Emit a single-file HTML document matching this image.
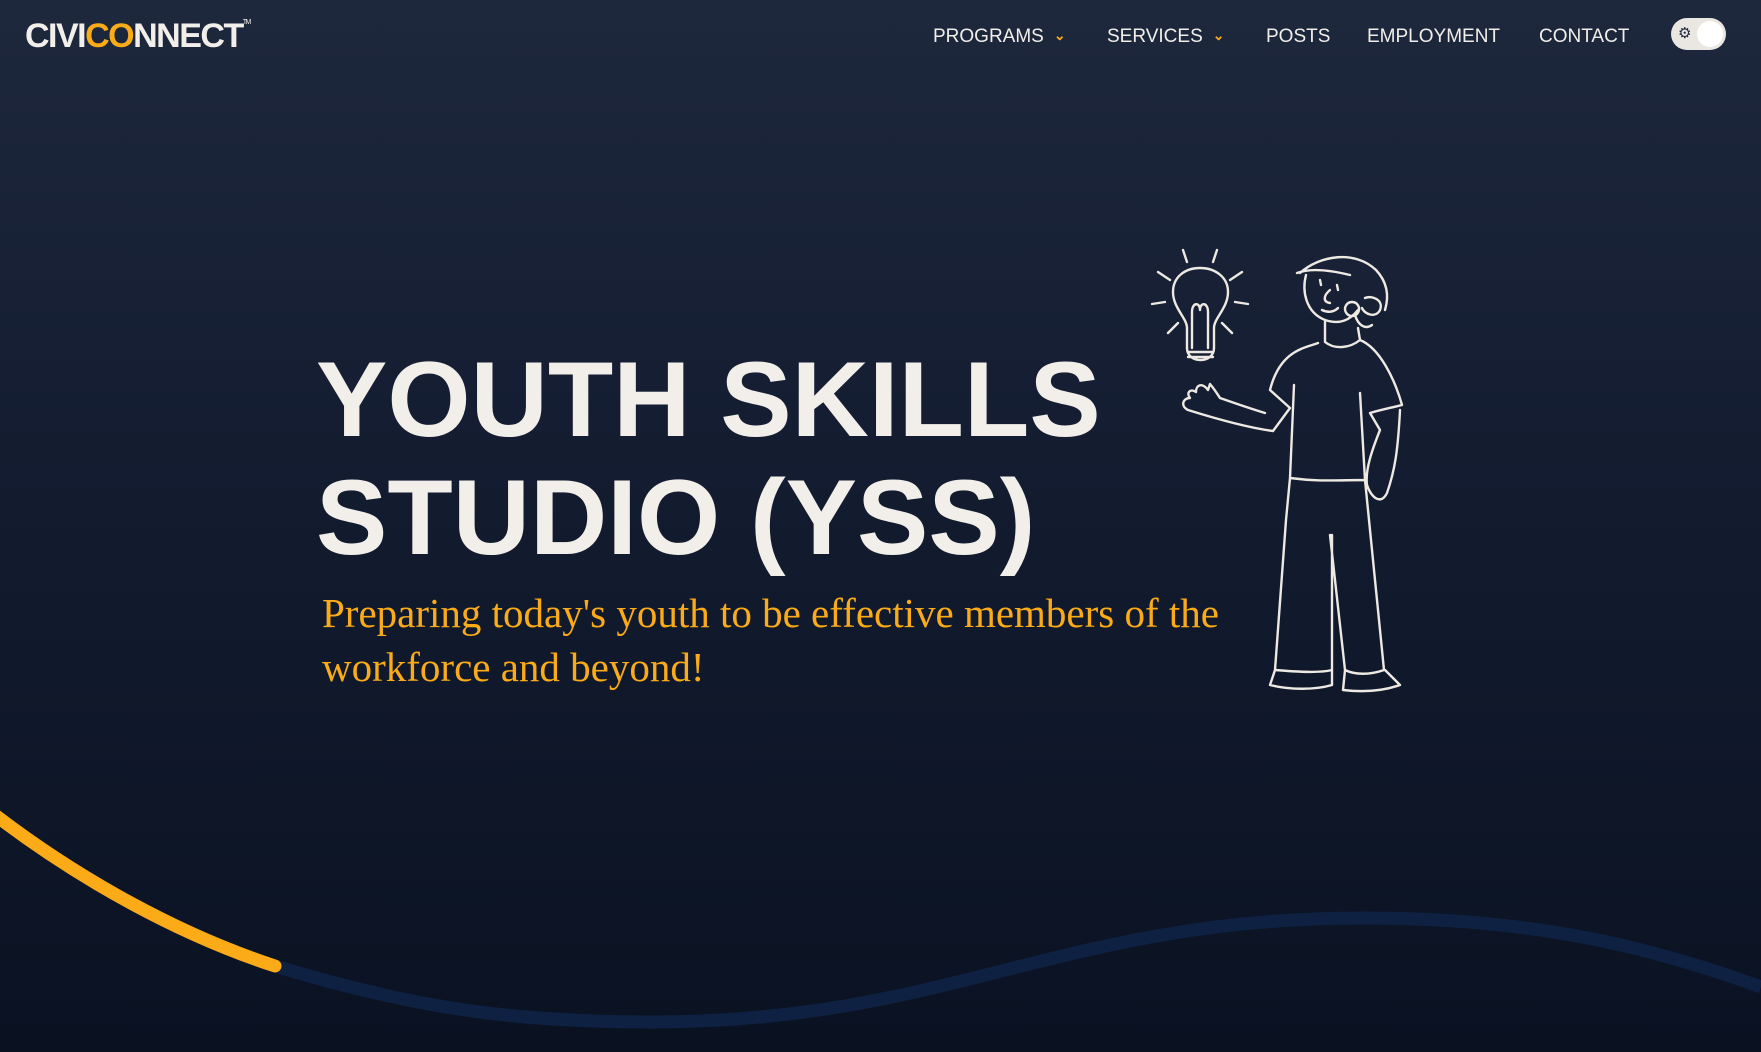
<!DOCTYPE html>
<html><head><meta charset="utf-8"><style>
html,body{margin:0;padding:0}
body{width:1761px;height:1052px;overflow:hidden;position:relative;background:linear-gradient(180deg,#1e283d 0%,#141d31 40%,#0a1222 100%);font-family:"Liberation Sans",sans-serif}
.logo{position:absolute;left:25px;top:17px;font-size:34px;font-weight:bold;color:#f2eee9;letter-spacing:-1.5px;}
.logo span{color:#fbab17}
.logo sup{font-size:7px;vertical-align:top;position:relative;top:2px;font-weight:normal}
.nav{position:absolute;top:26px;font-size:19px;color:#f2eee9;letter-spacing:0}
.chev{color:#fbab17;font-size:14px;margin-left:10px;position:relative;top:-2px;font-weight:bold}
.toggle{position:absolute;left:1671px;top:18px;width:55px;height:32px;border-radius:16px;background:#eae6e1}
.toggle .k{position:absolute;right:3px;top:3px;width:26px;height:26px;border-radius:50%;background:#fff}
.toggle .s{position:absolute;left:7px;top:6px;font-size:15px;color:#1e283d}
h1{position:absolute;left:316px;top:340px;margin:0;font-size:107px;line-height:118px;color:#f2eee9;font-weight:bold;letter-spacing:0}
p{position:absolute;left:322px;top:586px;margin:0;font-family:"Liberation Serif",serif;font-size:41px;line-height:54px;color:#fbab17}
</style></head><body>
<div class="logo">CIVI<span>CO</span>NNECT<sup>TM</sup></div>
<div class="nav" style="left:933px">PROGRAMS<span class="chev">&#8964;</span></div>
<div class="nav" style="left:1107px">SERVICES<span class="chev">&#8964;</span></div>
<div class="nav" style="left:1266px">POSTS</div>
<div class="nav" style="left:1367px">EMPLOYMENT</div>
<div class="nav" style="left:1539px">CONTACT</div>
<div class="toggle"><span class="s">&#9881;</span><div class="k"></div></div>
<h1>YOUTH SKILLS<br>STUDIO (YSS)</h1>
<p>Preparing today's youth to be effective members of the<br>workforce and beyond!</p>
<svg style="position:absolute;left:1140px;top:230px" width="300" height="480" viewBox="0 0 300 480" fill="none" stroke="#eee9e2" stroke-width="2.4" stroke-linecap="round" stroke-linejoin="round">
<path d="M43 20 L47 32 M77 20 L73 32 M18 42 L30 50 M102 42 L90 50 M12 74 L25 72 M108 74 L95 72 M28 103 L38 93 M92 103 L82 93"/>
<path d="M47 118 L47 98 C47 88 33 78 33 62 C33 47 45 38 60 38 C75 38 88 47 88 62 C88 78 74 88 74 98 L74 118"/>
<path d="M52 118 L52 82 C52 72 60 72 60 80 C60 72 68 72 68 82 L68 118 M47 118 C47 134 74 134 74 118 M48 122 L73 122 M48 127 L73 127"/>
<path d="M160 43 C180 25 215 20 236 40 C250 55 248 70 245 80 M157 43 C170 38 190 40 210 45 M166 45 C162 60 165 82 185 90 C200 95 210 90 218 80 M225 68 C232 65 244 70 240 80 C236 88 225 85 222 78 M212 72 a7 7 0 1 0 0.1 0 M215 85 C218 95 225 100 232 95"/>
<path d="M180 50 L181 55 M197 55 L198 60 M190 60 C183 66 183 72 190 73 M182 80 C188 83 194 82 198 78"/>
<path d="M185 92 L185 112 C195 120 210 118 220 110 L218 98 M178 113 C165 118 140 120 130 160 L150 178 L133 201 C110 198 80 190 48 180 C40 176 43 168 50 168 C46 163 50 158 56 162 C56 155 62 152 68 160 L70 154 C75 160 78 165 80 168 C100 175 115 180 125 183 M154 155 L150 248 C180 252 200 250 225 250 L220 163 M220 110 C240 118 255 150 262 175 C250 178 240 180 230 183 L240 200 C232 220 225 240 227 255 C230 265 240 277 247 263 C255 240 258 220 260 180 M150 248 L146 290 L135 440 C160 442 180 443 192 440 L192 305 M225 250 L244 440 C230 445 215 445 205 440 L190 305 M135 440 L130 455 C150 460 175 460 192 455 L192 440 M205 440 L203 460 C220 462 240 462 260 455 L245 440"/>
</svg>
<svg style="position:absolute;left:0;top:0" width="1761" height="1052">
<path d="M275 966 C420 1010 520 1022 651 1022 C950 1022 1060 918 1364 918 C1540 918 1660 950 1761 987" stroke="#0f2142" stroke-width="13" fill="none"/>
<path d="M-5 815 C80 880 180 935 275 966" stroke="#fbab17" stroke-width="13" fill="none" stroke-linecap="round"/>
</svg>
</body></html>
